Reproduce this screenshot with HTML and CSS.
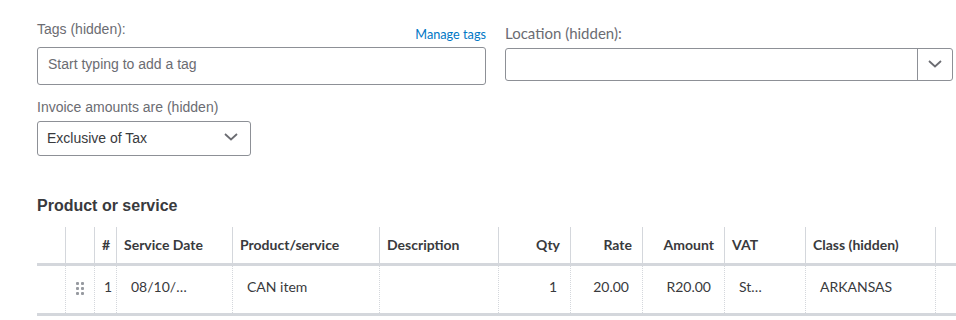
FILE: index.html
```html
<!doctype html>
<html>
<head>
<meta charset="utf-8">
<title>Invoice - product or service</title>
<link rel="stylesheet" href="styles.css">
</head>
<body>
<div class="page">
	<div class="form">
		<div class="col col-left">
			<div class="label-row">
				<span class="label">Tags (hidden):</span>
				<a href="#" class="link">Manage tags</a>
			</div>
			<div class="field field-tags">Start typing to add a tag</div>

			<div class="label label-amounts">Invoice amounts are (hidden)</div>
			<div class="field field-select">
				<span>Exclusive of Tax</span>
				<svg class="chev" width="14" height="8" viewBox="0 0 14 8"><path d="M1 1l6 5.5L13 1" fill="none" stroke="#6b6c72" stroke-width="1.8"/></svg>
			</div>
		</div>
		<div class="col col-right">
			<div class="label label-loc">Location (hidden):</div>
			<div class="field field-combo">
				<div class="combo-text"></div>
				<div class="combo-btn">
					<svg width="14" height="8" viewBox="0 0 14 8"><path d="M1 1l6 5.5L13 1" fill="none" stroke="#6b6c72" stroke-width="1.8"/></svg>
				</div>
			</div>
		</div>
	</div>

	<h2 class="title">Product or service</h2>

	<div class="grid">
		<div class="row head">
			<div class="cell first"></div>
			<div class="cell"></div>
			<div class="cell">#</div>
			<div class="cell">Service Date</div>
			<div class="cell">Product/service</div>
			<div class="cell">Description</div>
			<div class="cell num">Qty</div>
			<div class="cell num">Rate</div>
			<div class="cell num">Amount</div>
			<div class="cell">VAT</div>
			<div class="cell">Class (hidden)</div>
			<div class="cell"></div>
		</div>
		<div class="row body">
			<div class="cell first"></div>
			<div class="cell drag">
				<svg width="8" height="13" viewBox="0 0 8 13" fill="#979aa0">
					<rect x="0" y="0" width="3" height="3" rx="1"/><rect x="5" y="0" width="3" height="3" rx="1"/>
					<rect x="0" y="5" width="3" height="3" rx="1"/><rect x="5" y="5" width="3" height="3" rx="1"/>
					<rect x="0" y="10" width="3" height="3" rx="1"/><rect x="5" y="10" width="3" height="3" rx="1"/>
				</svg>
			</div>
			<div class="cell idx">1</div>
			<div class="cell">08/10/…</div>
			<div class="cell">CAN item</div>
			<div class="cell"></div>
			<div class="cell num">1</div>
			<div class="cell num">20.00</div>
			<div class="cell num">R20.00</div>
			<div class="cell">St…</div>
			<div class="cell">ARKANSAS</div>
			<div class="cell"></div>
		</div>
	</div>
</div>
</body>
</html>
```

FILE: styles.css
```css
*{ margin:0; padding:0; box-sizing:border-box;}
body{ background:#fff; font-family:"Liberation Sans", Arial, sans-serif; color:#393a3d;}
a{ text-decoration:none;}
.page{ padding:0 0 0 37px;}

/* top form */
.form{ display:grid; grid-template-columns:449px 448px; column-gap:19px; align-items:start;}
.label{ font-size:14px; line-height:16px; color:#6b6c72;}
.label-row{ display:flex; justify-content:space-between; margin-top:21px; height:16px;}
.link{ font-family:Lato, sans-serif; font-size:12.7px; line-height:14px; color:#0077c5; align-self:flex-end; margin-bottom:-4px;}
.field{ border:1px solid #8d9096; border-radius:3px; font-size:14px; background:#fff;}
.field-tags{ margin-top:10px; height:38px; line-height:33px; padding:0 10px 3px; color:#6b6c72;}
.label-amounts{ margin-top:14px;}
.field-select{ margin-top:6px; width:214px; height:35px; display:flex; align-items:center; justify-content:space-between; padding:0 12px 1px 9px; color:#393a3d;}
.chev{ margin-bottom:2px;}
.label-loc{ font-family:Lato, sans-serif; font-size:15px; margin-top:25px; color:#6b6c72;}
.field-combo{ margin-top:7px; height:33px; display:flex;}
.combo-text{ flex:1;}
.combo-btn{ width:35px; border-left:1px solid #8d9096; display:flex; align-items:center; justify-content:center; padding-bottom:1px;}

/* product table */
.title{ font-size:16px; line-height:20px; font-weight:bold; color:#393a3d; margin-top:40px;}
.grid{ margin-top:11px; font-family:Lato, sans-serif;}
.row{ display:grid; grid-template-columns:28px 29px 22px 116px 147px 119px 72px 72px 82px 81px 130px 1fr;}
.cell{ border-left:1px solid #d4d7dc; white-space:nowrap; overflow:hidden;}
.cell.first{ border-left:0;}
.head{ height:39px; border-bottom:3px solid #d4d7dc; font-size:14px; font-weight:bold; color:#393a3d;}
.head .cell{ line-height:36px; padding:0 10px 0 7px;}
.head .num{ text-align:right;}
.body{ height:50px; border-bottom:3px solid #d4d7dc; font-size:14px; color:#393a3d;}
.body .cell{ border-left-style:dotted; line-height:42px; padding:0 13px 0 14px;}
.body .cell.first{ border-left:0;}
.body .num{ text-align:right;}
.body .drag{ display:flex; align-items:center; justify-content:center; padding:0 1px 3px 0;}
.body .idx{ padding:0 0 0 9px;}
```
